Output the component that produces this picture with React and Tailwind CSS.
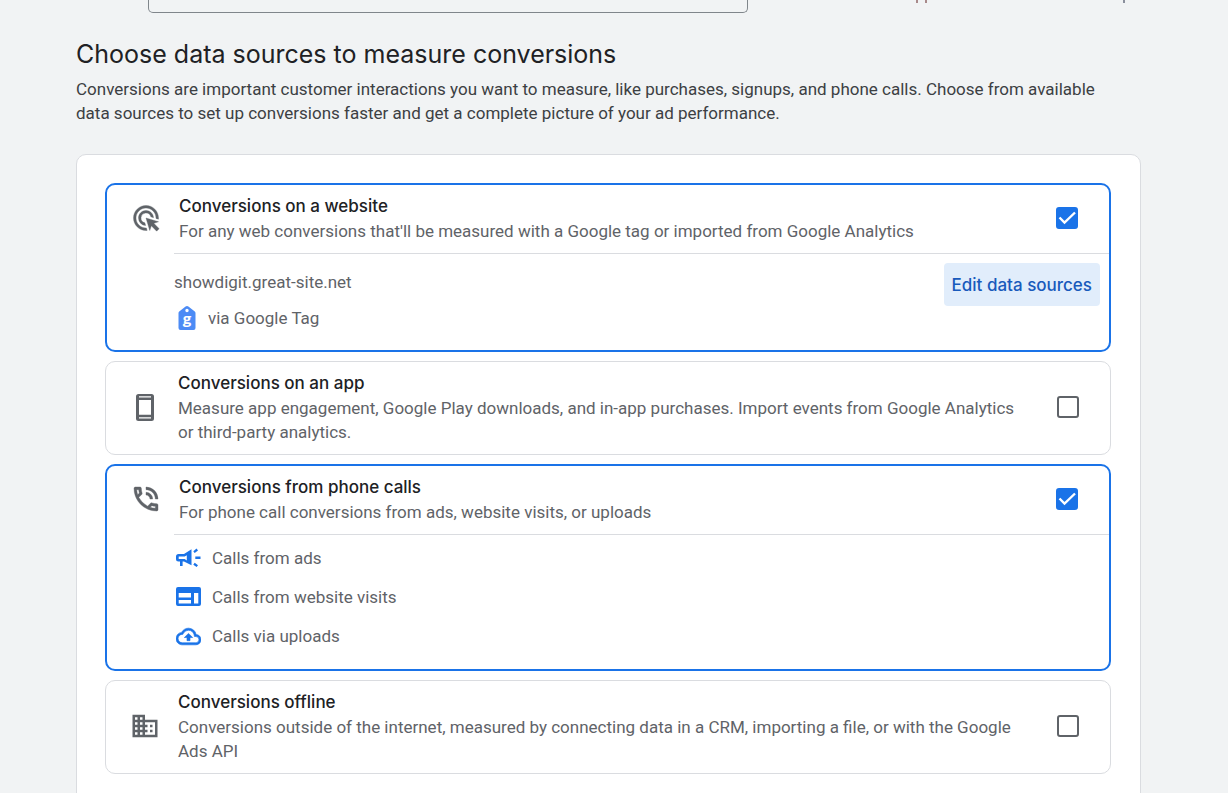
import { useState } from 'react';
import { MdAdsClick, MdBusiness, MdOutlineBackup, MdOutlinePhoneInTalk } from 'react-icons/md';

function GoogleTagIcon() {
  return (
    <svg viewBox="0 0 18 24" className="h-6 w-[18px]" aria-hidden="true">
      <path fill="#4c8bf5" fillRule="evenodd" d="M9 0c.6 0 1 .2 1.400.500L16.800 5.500c.5.400.700.900.700 1.500V22a2 2 0 0 1-2 2h-13a2 2 0 0 1-2-2V7c0-.6.200-1.100.700-1.500L7.600.500C8 .2 8.400 0 9 0Zm0 2.800a1.700 1.700 0 1 0 0 3.400 1.700 1.700 0 0 0 0-3.400Z" />
      <text x="9" y="18" textAnchor="middle" fill="#fff" className="font-['Open_Sans',sans-serif] text-[15px] font-bold">g</text>
    </svg>
  );
}

function PhoneIcon() {
  return (
    <svg viewBox="0 0 18 27" className="h-[27px] w-[18px] text-[#5f6368]" fill="currentColor" aria-hidden="true">
      <path fillRule="evenodd" d="M2.500 0h13A2.500 2.500 0 0 1 18 2.500v22a2.500 2.500 0 0 1-2.500 2.500h-13A2.500 2.500 0 0 1 0 24.500v-22A2.500 2.500 0 0 1 2.500 0ZM3 2.200v1.300h12V2.200H3Zm0 3.800v14.700h12V6H3Zm0 17.200v1.300h12v-1.300H3Z" />
    </svg>
  );
}

function MegaphoneIcon() {
  return (
    <svg viewBox="0 0 25 20" className="h-5 w-[25px]" fill="currentColor" aria-hidden="true">
      <path fillRule="evenodd" d="M2.500 6H8l7.500-4.700v16L8 13.500H6.600V18H4v-4.500H2.500A2.500 2.500 0 0 1 0 11V8.500A2.500 2.500 0 0 1 2.500 6Zm.2 2.500v2.600H8.700l2.100 1.300V7.200L8.700 8.500H2.700Z" />
      <path d="M17.300 3.200l3.300-2.700 1.400 1.900-3.300 2.600zM19.300 8.500h5.200v2.400h-5.200zM18.700 14.800l3.300 2.400-1.400 1.900-3.300-2.400z" />
    </svg>
  );
}

function WebIcon() {
  return (
    <svg viewBox="0 0 25 20" className="h-5 w-[25px]" fill="currentColor" aria-hidden="true">
      <path fillRule="evenodd" d="M2 0h21a2 2 0 0 1 2 2v15a2 2 0 0 1-2 2H2a2 2 0 0 1-2-2V2a2 2 0 0 1 2-2ZM2.700 6v4.500h12.300V6H2.700Zm0 7v3.500h12.300V13H2.700ZM18 6v10.500h4.300V6H18Z" />
    </svg>
  );
}

function CloudIcon() {
  return <MdOutlineBackup className="size-[25px] [&_[fill=none]]:stroke-none" strokeWidth={0.6} />;
}

const callSources = [
  { icon: MegaphoneIcon, label: 'Calls from ads' },
  { icon: WebIcon, label: 'Calls from website visits' },
  { icon: CloudIcon, label: 'Calls via uploads' }
];

function Checkbox({ id, checked, onChange }) {
  return (
    <span className="grid size-[22px] shrink-0 place-items-center">
      <input
        id={id}
        type="checkbox"
        checked={checked}
        onChange={onChange}
        className="col-start-1 row-start-1 size-[22px] appearance-none rounded-[3px] border-2 border-[#5f6368] bg-white checked:border-[#1a73e8] checked:bg-[#1a73e8]"
      />
      {checked && (
        <svg viewBox="0 0 22 22" className="pointer-events-none col-start-1 row-start-1 size-[22px]" fill="none" stroke="#fff" strokeWidth="2.400" aria-hidden="true">
          <path d="M3.500 10.500l5 5L19 5.500" />
        </svg>
      )}
    </span>
  );
}

function SourceCard({ id, icon, title, description, checked, onChange, children }) {
  return (
    <section className={checked ? 'rounded-[10px] border-2 border-[#1a73e8] bg-white' : 'rounded-[10px] border border-[#dadce0] bg-white pb-0.5'}>
      <label htmlFor={id} className="flex items-center py-2 pr-[31px]">
        <span className="flex w-[72px] shrink-0 justify-center pl-1.5 text-[#5f6368]">{icon}</span>
        <span className="min-w-0 flex-1 pr-6">
          <span className="block font-['Inter',sans-serif] text-[17px] leading-[26px] font-medium text-[#202124]">{title}</span>
          <span className="block text-[17px] leading-6 text-[#5f6368]">{description}</span>
        </span>
        <Checkbox id={id} checked={checked} onChange={onChange} />
      </label>
      {checked && children}
    </section>
  );
}

export default function App() {
  const [selected, setSelected] = useState({ website: true, app: false, calls: true, offline: false });

  function toggle(key) {
    setSelected({ ...selected, [key]: !selected[key] });
  }

  return (
    <main className="h-screen overflow-hidden bg-[#f1f3f4] pr-[87px] pl-[76px] font-['Roboto',sans-serif]">
      <div className="flex justify-between pr-4 pl-[72px]">
        <div className="h-[13px] w-[600px] rounded-b-[5px] border border-t-0 border-[#80868b]" />
        <div className="flex h-[3px] gap-[7px]" aria-hidden="true">
          <span className="w-0.5 bg-[#a8898a]" />
          <span className="w-0.5 bg-[#a8898a]" />
          <span className="ml-[189px] w-0.5 bg-[#8a8f9c]" />
        </div>
      </div>

      <h1 className="mt-6 font-['Inter',sans-serif] text-[25px] leading-[34px] text-[#202124]">Choose data sources to measure conversions</h1>
      <p className="mt-1.5 max-w-[1050px] text-[17px] leading-6 text-[#3c4043]">
        Conversions are important customer interactions you want to measure, like purchases, signups, and phone calls. Choose from available data sources to set up conversions faster and get a complete picture of your ad performance.
      </p>

      <div className="mt-[29px] flex min-h-screen flex-col gap-[9px] rounded-[10px] border border-[#dadce0] bg-white pt-7 pr-[29px] pl-7">
        <SourceCard
          id="website"
          icon={<MdAdsClick className="size-[30px] [&_[fill=none]]:stroke-none" strokeWidth={0.3} />}
          title="Conversions on a website"
          description="For any web conversions that'll be measured with a Google tag or imported from Google Analytics"
          checked={selected.website}
          onChange={() => toggle('website')}
        >
          <div className="mt-0.5 ml-[67px] flex justify-between border-t border-[#dadce0] pt-[9px] pr-[9px] pb-5 text-[17px] leading-6 text-[#5f6368]">
            <div className="pt-[7px]">
              <p>showdigit.great-site.net</p>
              <p className="mt-3 flex items-center gap-3 pl-1"><GoogleTagIcon />via Google Tag</p>
            </div>
            <button className="h-[43px] rounded bg-[#e1edfb] px-2 font-['Inter',sans-serif] text-[17px] font-medium text-[#185abc]">Edit data sources</button>
          </div>
        </SourceCard>
        <SourceCard
          id="app"
          icon={<PhoneIcon />}
          title="Conversions on an app"
          description="Measure app engagement, Google Play downloads, and in-app purchases. Import events from Google Analytics or third-party analytics."
          checked={selected.app}
          onChange={() => toggle('app')}
        />
        <SourceCard
          id="calls"
          icon={<MdOutlinePhoneInTalk className="size-8 [&_[fill=none]]:stroke-none" strokeWidth={0.3} />}
          title="Conversions from phone calls"
          description="For phone call conversions from ads, website visits, or uploads"
          checked={selected.calls}
          onChange={() => toggle('calls')}
        >
          <ul className="mt-0.5 ml-[67px] flex flex-col gap-[15px] border-t border-[#dadce0] pt-[11px] pb-[21px] text-[17px] leading-6 text-[#5f6368]">
            {callSources.map(({ icon: Icon, label }) => (
              <li key={label} className="flex h-6 items-center gap-[9px]">
                <span className="flex w-[29px] justify-center text-[#1a73e8]"><Icon /></span>
                {label}
              </li>
            ))}
          </ul>
        </SourceCard>
        <SourceCard
          id="offline"
          icon={<MdBusiness className="size-[30px]" />}
          title="Conversions offline"
          description="Conversions outside of the internet, measured by connecting data in a CRM, importing a file, or with the Google Ads API"
          checked={selected.offline}
          onChange={() => toggle('offline')}
        />
      </div>
    </main>
  );
}
